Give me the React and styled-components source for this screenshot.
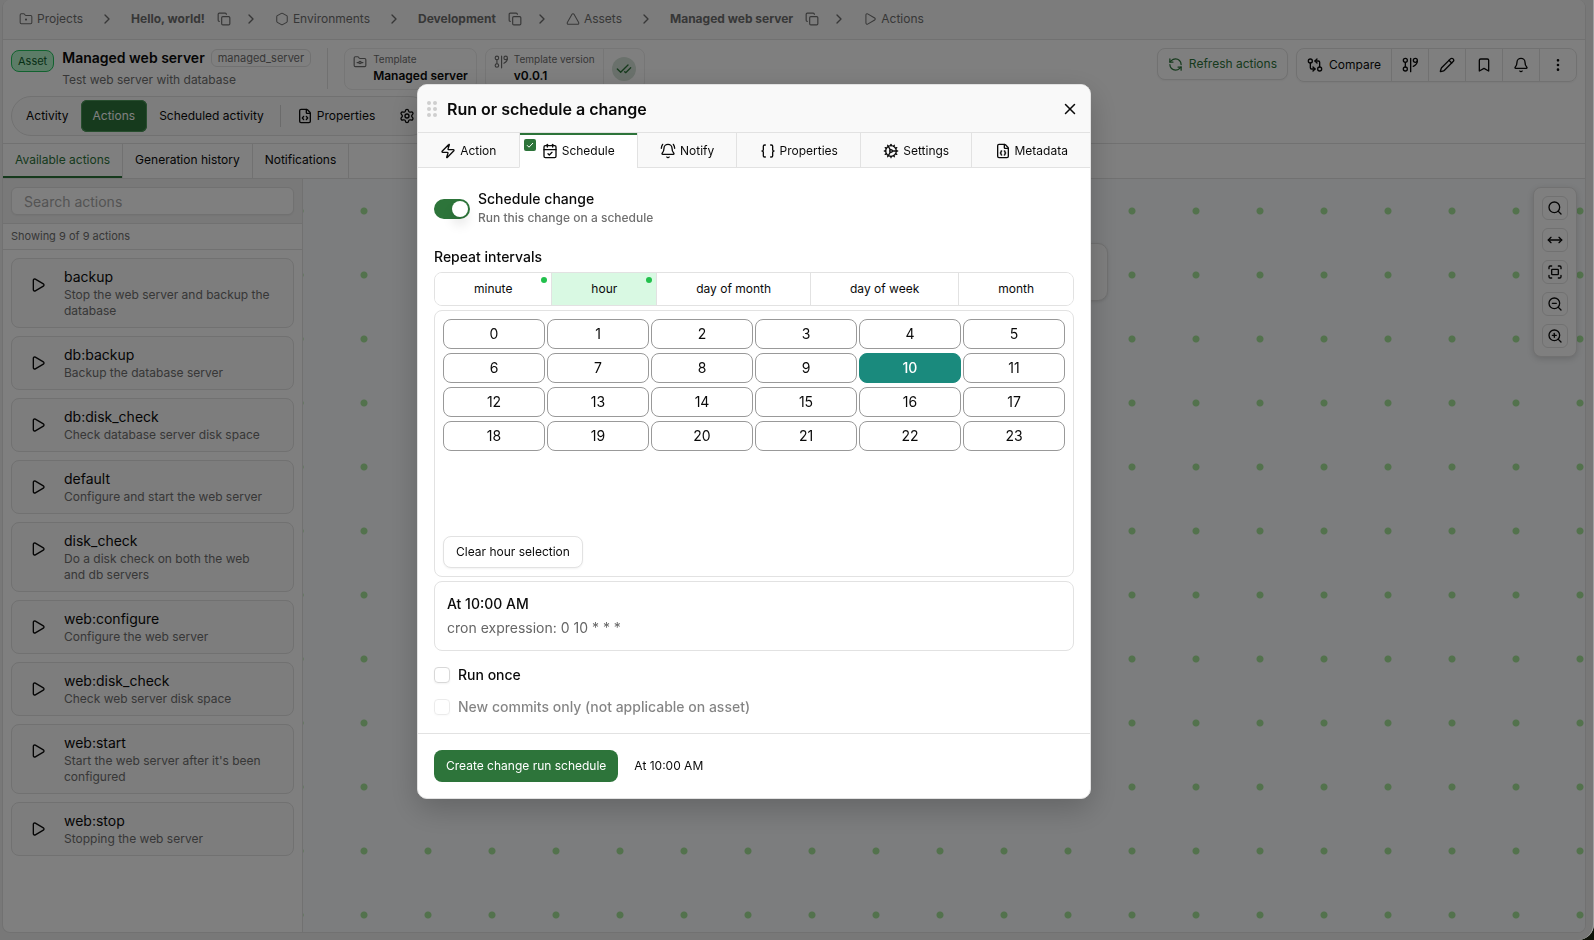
import { useState } from "react";
import styled, { createGlobalStyle, css } from "styled-components";
import {
  Bell, BellRing, Bookmark, Braces, CalendarCheck, CheckCheck, ChevronRight, Cog, Copy,
  EllipsisVertical, FileCode, FileJson, FolderDot, FolderGit, Fullscreen, GitCompareArrows,
  Hexagon, MoveHorizontal, Pencil, Play, RefreshCcw, Search, Settings, Triangle, X, Zap,
  ZoomIn, ZoomOut,
} from "lucide-react";

const actions = [
  { name: "backup", description: "Stop the web server and backup the database" },
  { name: "db:backup", description: "Backup the database server" },
  { name: "db:disk_check", description: "Check database server disk space" },
  { name: "default", description: "Configure and start the web server" },
  { name: "disk_check", description: "Do a disk check on both the web and db servers" },
  { name: "web:configure", description: "Configure the web server" },
  { name: "web:disk_check", description: "Check web server disk space" },
  { name: "web:start", description: "Start the web server after it's been configured" },
  { name: "web:stop", description: "Stopping the web server" },
];

const crumbs = [
  { label: "Projects", icon: FolderDot },
  { label: "Hello, world!", strong: true },
  { label: "Environments", icon: Hexagon },
  { label: "Development", strong: true },
  { label: "Assets", icon: Triangle },
  { label: "Managed web server", strong: true },
  { label: "Actions", icon: Play },
];

const modalTabs = [
  { label: "Action", icon: Zap },
  { label: "Schedule", icon: CalendarCheck },
  { label: "Notify", icon: BellRing },
  { label: "Properties", icon: Braces },
  { label: "Settings", icon: Cog },
  { label: "Metadata", icon: FileJson },
];

const intervals = ["minute", "hour", "day of month", "day of week", "month"];
const hours = Array.from({ length: 24 }, (_, i) => i);

function VersionIcon({ size = 16 }) {
  return (
    <svg width={size} height={size} viewBox="0 0 24 24" fill="none" stroke="currentColor" strokeWidth="2" strokeLinecap="round" strokeLinejoin="round" aria-hidden="true">
      <circle cx="5" cy="5" r="3" />
      <circle cx="5" cy="18" r="3" />
      <path d="M5 8v7M13 2v20" />
      <circle cx="20" cy="5" r="3" />
      <path d="M23 6c0 4-2 6-6 8" />
    </svg>
  );
}

function Grip() {
  return (
    <svg width="10" height="18" viewBox="0 0 10 18" fill="#cfcfcf" aria-hidden="true">
      {[3, 9, 15].map((y) => (
        <g key={y}>
          <circle cx="2" cy={y} r="2" />
          <circle cx="8" cy={y} r="2" />
        </g>
      ))}
    </svg>
  );
}

function Breadcrumbs() {
  return (
    <CrumbBar>
      {crumbs.map(({ label, icon: Icon, strong }, i) => (
        <CrumbItem key={label}>
          {i > 0 && <Separator><ChevronRight size={16} /></Separator>}
          <CrumbLink href="#" $strong={strong}>
            {Icon && <Icon size={14} strokeWidth={1.75} />}
            {label}
          </CrumbLink>
          {strong && <CopyButton aria-label={`Copy ${label}`}><Copy size={14} /></CopyButton>}
        </CrumbItem>
      ))}
    </CrumbBar>
  );
}

function AssetHeader() {
  return (
    <Header>
      <HeaderRow>
        <AssetBadge>Asset</AssetBadge>
        <AssetInfo>
          <AssetTitle>Managed web server <Slug>managed_server</Slug></AssetTitle>
          <Muted>Test web server with database</Muted>
        </AssetInfo>
        <HeaderDivider />
        <InfoPill>
          <InfoContent>
            <FolderGit size={14} />
            <div>
              <InfoLabel>Template</InfoLabel>
              <InfoValue>Managed server</InfoValue>
            </div>
          </InfoContent>
        </InfoPill>
        <InfoPill>
          <InfoContent>
            <VersionIcon size={14} />
            <div>
              <InfoLabel>Template version</InfoLabel>
              <InfoValue>v0.0.1</InfoValue>
            </div>
          </InfoContent>
          <InfoStatus><span><CheckCheck size={16} /></span></InfoStatus>
        </InfoPill>
        <HeaderActions>
          <RefreshButton><RefreshCcw size={15} />Refresh actions</RefreshButton>
          <ButtonGroup>
            <GroupButton $wide><GitCompareArrows size={16} />Compare</GroupButton>
            <GroupButton aria-label="Versions"><VersionIcon /></GroupButton>
            <GroupButton aria-label="Edit"><Pencil size={16} /></GroupButton>
            <GroupButton aria-label="Bookmark"><Bookmark size={16} /></GroupButton>
            <GroupButton aria-label="Notifications"><Bell size={16} /></GroupButton>
            <GroupButton aria-label="More"><EllipsisVertical size={16} /></GroupButton>
          </ButtonGroup>
        </HeaderActions>
      </HeaderRow>
      <NavPill>
        <NavItem href="#">Activity</NavItem>
        <NavItem href="#" $active>Actions</NavItem>
        <NavItem href="#">Scheduled activity</NavItem>
        <NavDivider />
        <NavItem href="#"><FileCode size={16} />Properties</NavItem>
        <NavItem href="#" aria-label="Settings"><Settings size={16} /></NavItem>
      </NavPill>
    </Header>
  );
}

function Sidebar() {
  return (
    <Side>
      <SearchArea>
        <SearchInput type="search" placeholder="Search actions" aria-label="Search actions" />
      </SearchArea>
      <ResultCount>Showing 9 of 9 actions</ResultCount>
      <ActionList>
        {actions.map((action) => (
          <ActionCard key={action.name}>
            <PlayButton aria-label={`Run ${action.name}`}><Play size={16} /></PlayButton>
            <div>
              <ActionName>{action.name}</ActionName>
              <Muted>{action.description}</Muted>
            </div>
          </ActionCard>
        ))}
      </ActionList>
    </Side>
  );
}

function ScheduleModal() {
  const [tab, setTab] = useState("Schedule");
  const [interval, setInterval] = useState("hour");
  const [hour, setHour] = useState(10);

  return (
    <Modal role="dialog" aria-labelledby="modal-title">
      <ModalHeader>
        <Grip />
        <ModalTitle id="modal-title">Run or schedule a change</ModalTitle>
        <CloseButton aria-label="Close"><X size={18} /></CloseButton>
      </ModalHeader>
      <ModalTabs>
        {modalTabs.map(({ label, icon: Icon }) => (
          <ModalTab key={label} $active={tab === label} onClick={() => setTab(label)}>
            {label === "Schedule" && (
              <TabMark>
                <svg width="8" height="8" viewBox="0 0 8 8" fill="none" stroke="#fff" aria-hidden="true"><path d="M1 4.2 3 6.2 7 2" /></svg>
              </TabMark>
            )}
            <Icon size={16} />
            {label}
          </ModalTab>
        ))}
      </ModalTabs>
      <ModalBody>
        <SwitchRow>
          <Switch type="checkbox" role="switch" defaultChecked />
          <span>
            <SwitchTitle>Schedule change</SwitchTitle>
            <SwitchHint>Run this change on a schedule</SwitchHint>
          </span>
        </SwitchRow>
        <SectionTitle>Repeat intervals</SectionTitle>
        <Segments>
          {intervals.map((name) => (
            <Segment key={name} $active={interval === name} onClick={() => setInterval(name)}>
              {name}
              {(name === "minute" || name === "hour") && <Dot />}
            </Segment>
          ))}
        </Segments>
        <HourPanel>
          <HourGrid>
            {hours.map((h) => (
              <HourButton key={h} $active={hour === h} onClick={() => setHour(h)}>{h}</HourButton>
            ))}
          </HourGrid>
          <OutlineButton onClick={() => setHour(null)}>Clear hour selection</OutlineButton>
        </HourPanel>
        <Summary>
          <SummaryTitle>At 10:00 AM</SummaryTitle>
          <SummaryCron>cron expression: 0 10 * * *</SummaryCron>
        </Summary>
        <Checks>
          <CheckLabel><Checkbox type="checkbox" />Run once</CheckLabel>
          <CheckLabel $disabled><Checkbox type="checkbox" disabled />New commits only (not applicable on asset)</CheckLabel>
        </Checks>
      </ModalBody>
      <ModalFooter>
        <PrimaryButton>Create change run schedule</PrimaryButton>
        <span>At 10:00 AM</span>
      </ModalFooter>
    </Modal>
  );
}

export default function App() {
  return (
    <>
      <GlobalStyle />
      <Screen>
        <Frame>
          <Breadcrumbs />
          <AssetHeader />
          <SubTabs>
            <SubTab href="#" $active>Available actions</SubTab>
            <SubTab href="#">Generation history</SubTab>
            <SubTab href="#">Notifications</SubTab>
          </SubTabs>
          <Main>
            <Sidebar />
            <Canvas>
              <CanvasNode />
              <CanvasTools>
                <ToolButton aria-label="Search"><Search size={16} /></ToolButton>
                <ToolButton aria-label="Fit width"><MoveHorizontal size={16} /></ToolButton>
                <ToolButton aria-label="Fit screen"><Fullscreen size={16} /></ToolButton>
                <ToolButton aria-label="Zoom out"><ZoomOut size={16} /></ToolButton>
                <ToolButton aria-label="Zoom in"><ZoomIn size={16} /></ToolButton>
              </CanvasTools>
            </Canvas>
          </Main>
        </Frame>
      </Screen>
      <Overlay />
      <ScheduleModal />
    </>
  );
}

const line = "#e2e2e2";
const green = "#2d743a";

const GlobalStyle = createGlobalStyle`
  * {
    box-sizing: border-box;
  }

  body {
    margin: 0;
    background: #10140a;
    color: #0a0a0a;
    font-family: Inter, "Liberation Sans", sans-serif;
    font-size: 12px;
    line-height: 16px;
    font-weight: 400;
  }

  button, input {
    font: inherit;
    color: inherit;
    margin: 0;
  }

  button {
    background: none;
    border: 0;
    padding: 0;
    cursor: pointer;
  }

  a {
    color: inherit;
    text-decoration: none;
  }

  h1, h2, h3, p {
    margin: 0;
  }

  svg {
    flex-shrink: 0;
  }
`;

const Screen = styled.div`
  display: flex;
  height: 100vh;
  padding: 0 8px 7px 2px;
  background: #f1f1f1;
  border-bottom-right-radius: 16px;
`;

const Frame = styled.div`
  flex: 1;
  min-width: 0;
  display: flex;
  flex-direction: column;
  background: #fff;
  border: 1px solid ${line};
  border-top: 0;
  border-radius: 8px;
  overflow: hidden;
`;

const CrumbBar = styled.nav`
  display: flex;
  align-items: center;
  height: 40px;
  padding: 0 16px 2px;
  background: #f8f8f8;
  border-bottom: 1px solid ${line};
  color: #6f6f6f;
`;

const CrumbItem = styled.div`
  display: flex;
  align-items: center;
`;

const CrumbLink = styled.a`
  display: flex;
  align-items: center;
  gap: 4px;
  font-weight: ${(props) => (props.$strong ? 700 : 400)};
`;

const Separator = styled.span`
  display: flex;
  padding: 0 16px;
`;

const CopyButton = styled.button`
  display: flex;
  margin: 0 -4px 0 12px;
`;

const Header = styled.header`
  padding: 8px 8px 7px;
  border-bottom: 1px solid ${line};
`;

const HeaderRow = styled.div`
  display: flex;
  align-items: flex-start;
  gap: 8px;
  margin-bottom: 6px;
`;

const AssetBadge = styled.span`
  margin-top: 2px;
  padding: 2px 6px;
  background: #b9f8cf;
  border: 1px solid #22c55e;
  border-radius: 8px;
  color: #10602c;
  font-size: 11px;
`;

const AssetInfo = styled.div`
  padding-right: 8px;
`;

const AssetTitle = styled.h1`
  display: flex;
  align-items: center;
  gap: 6px;
  margin-bottom: 4px;
  font-size: 14px;
  line-height: 20px;
  font-weight: 600;
`;

const Slug = styled.span`
  padding: 0 6px;
  border: 1px solid ${line};
  border-radius: 6px;
  color: #6f6f6f;
  font-size: 11px;
  line-height: 16px;
  font-weight: 400;
`;

const Muted = styled.p`
  color: #6f6f6f;
`;

const HeaderDivider = styled.div`
  width: 1px;
  height: 41px;
  margin-right: 8px;
  background: ${line};
`;

const InfoPill = styled.div`
  display: flex;
  height: 42px;
  border: 1px solid #ececec;
  border-radius: 8px;
`;

const InfoContent = styled.div`
  display: flex;
  gap: 6px;
  padding: 3px 8px;

  svg {
    margin-top: 3px;
    color: #6f6f6f;
  }
`;

const InfoLabel = styled.div`
  margin-bottom: 2px;
  color: #6f6f6f;
  font-size: 10px;
  line-height: 14px;
`;

const InfoValue = styled.div`
  font-weight: 600;
`;

const InfoStatus = styled.div`
  padding: 8px;
  border-left: 1px solid #ececec;

  span {
    display: grid;
    place-items: center;
    width: 24px;
    height: 24px;
    border-radius: 50%;
    background: #d5e3d8;
    color: ${green};
  }
`;

const HeaderActions = styled.div`
  display: flex;
  align-items: flex-start;
  gap: 8px;
  margin-left: auto;
`;

const OutlineButton = styled.button`
  display: flex;
  align-items: center;
  gap: 6px;
  height: 32px;
  padding: 0 12px;
  background: #fff;
  border: 1px solid ${line};
  border-radius: 8px;
  box-shadow: 0 1px 2px rgba(0, 0, 0, 0.05);
`;

const RefreshButton = styled(OutlineButton)`
  padding: 0 10px;
  color: ${green};
`;

const ButtonGroup = styled.div`
  display: flex;
  height: 34px;
  border: 1px solid ${line};
  border-radius: 8px;
  box-shadow: 0 1px 2px rgba(0, 0, 0, 0.05);
`;

const GroupButton = styled.button`
  display: flex;
  align-items: center;
  justify-content: center;
  gap: 6px;
  width: ${(props) => (props.$wide ? "auto" : "37px")};
  padding: 0 10px;

  & + & {
    border-left: 1px solid ${line};
  }
`;

const NavPill = styled.nav`
  display: flex;
  align-items: center;
  width: fit-content;
  padding: 3px 2px;
  background: #fafafa;
  border: 1px solid ${line};
  border-radius: 20px;
`;

const NavItem = styled.a`
  display: flex;
  align-items: center;
  gap: 4px;
  height: 32px;
  padding: 0 12px;
  border-radius: 6px;
  ${(props) => props.$active && css`
    background: ${green};
    box-shadow: inset 0 0 0 1px #4f9a5d;
    color: #fff;
  `}
`;

const NavDivider = styled.span`
  width: 1px;
  height: 22px;
  margin: 0 4px;
  background: #d6d6d6;
`;

const SubTabs = styled.nav`
  display: flex;
  height: 35px;
  border-bottom: 1px solid ${line};
`;

const SubTab = styled.a`
  display: flex;
  align-items: center;
  padding: 0 12px 2px;
  border-right: 1px solid ${line};
  ${(props) => props.$active && css`
    color: ${green};
    box-shadow: inset 0 -2px ${green};
  `}
`;

const Main = styled.div`
  flex: 1;
  display: flex;
  min-height: 0;
`;

const Side = styled.aside`
  flex: 0 0 300px;
  border-right: 1px solid ${line};
`;

const SearchArea = styled.div`
  padding: 8px;
  background: #f3f3f3;
  border-bottom: 1px solid ${line};
`;

const SearchInput = styled.input`
  display: block;
  width: 100%;
  height: 28px;
  padding: 0 12px;
  background: #fff;
  border: 1px solid ${line};
  border-radius: 6px;
  box-shadow: 0 1px 2px rgba(0, 0, 0, 0.05);
  font-size: 14px;

  &::placeholder {
    color: #a8a8a8;
  }
`;

const ResultCount = styled.p`
  padding: 4px 8px 5px;
  border-bottom: 1px solid ${line};
  color: #6f6f6f;
  font-size: 11px;
`;

const ActionList = styled.div`
  display: flex;
  flex-direction: column;
  gap: 8px;
  padding: 8px;
`;

const ActionCard = styled.article`
  display: flex;
  background: #fafafa;
  border: 1px solid ${line};
  border-radius: 8px;

  > div {
    padding: 8px 22px 8px 0;
  }
`;

const PlayButton = styled.button`
  flex: 0 0 52px;
  display: grid;
  place-items: center;
  height: 52px;
`;

const ActionName = styled.h3`
  font-size: 14px;
  line-height: 20px;
  font-weight: 400;
`;

const Canvas = styled.section`
  flex: 1;
  position: relative;
  background: #f8fafc radial-gradient(circle, #a6e59a 3px, transparent 4px) 29px 0 / 64px 64px;
`;

const CanvasNode = styled.div`
  position: absolute;
  top: 64px;
  left: 545px;
  width: 260px;
  height: 58px;
  background: #fff;
  border: 1px solid ${line};
  border-radius: 10px;
  box-shadow: 0 1px 3px rgba(0, 0, 0, 0.1);
`;

const CanvasTools = styled.div`
  position: absolute;
  top: 8px;
  right: 8px;
  display: grid;
  gap: 8px;
  padding: 8px;
  background: #fff;
  border: 1px solid ${line};
  border-radius: 8px;
  box-shadow: 0 2px 6px rgba(0, 0, 0, 0.15);
`;

const ToolButton = styled.button`
  display: grid;
  place-items: center;
  width: 26px;
  height: 24px;
  border: 1px solid ${line};
  border-radius: 6px;
`;

const Overlay = styled.div`
  position: fixed;
  inset: 0;
  background: rgba(0, 0, 0, 0.5);
  border-right: 1px solid rgba(255, 255, 255, 0.3);
  border-bottom-right-radius: 16px;
`;

const Modal = styled.section`
  position: fixed;
  top: 84px;
  left: 417px;
  width: 674px;
  background: #fff;
  border: 1px solid ${line};
  border-radius: 10px;
  box-shadow: 0 10px 30px rgba(0, 0, 0, 0.2);
  overflow: hidden;
`;

const ModalHeader = styled.header`
  display: flex;
  align-items: center;
  gap: 10px;
  height: 48px;
  padding: 0 10px 0 9px;
  background: #f9f9f9;
  border-bottom: 1px solid ${line};
`;

const ModalTitle = styled.h2`
  font-size: 16px;
  line-height: 24px;
  font-weight: 600;
`;

const CloseButton = styled.button`
  display: grid;
  place-items: center;
  width: 20px;
  height: 20px;
  margin-left: auto;
`;

const ModalTabs = styled.div`
  display: flex;
  height: 35px;
`;

const ModalTab = styled.button`
  position: relative;
  flex: 1 1 auto;
  display: flex;
  align-items: center;
  justify-content: center;
  gap: 4px;
  padding-top: 2px;
  background: ${(props) => (props.$active ? "#fff" : "#f9f9f9")};
  border-bottom: 1px solid ${(props) => (props.$active ? "#fff" : line)};
  box-shadow: ${(props) => (props.$active ? `inset 0 2px ${green}` : "none")};

  & + & {
    border-left: 1px solid ${line};
  }
`;

const TabMark = styled.span`
  position: absolute;
  top: 6px;
  left: 4px;
  display: grid;
  place-items: center;
  width: 12px;
  height: 12px;
  background: ${green};
  border-radius: 2px;
`;

const ModalBody = styled.div`
  padding: 21px 16px 18px;
`;

const SwitchRow = styled.label`
  display: flex;
  align-items: center;
  gap: 8px;
  margin-bottom: 21px;
`;

const Switch = styled.input`
  appearance: none;
  width: 36px;
  height: 20px;
  margin-top: 3px;
  padding: 2px;
  background: ${green};
  border-radius: 10px;

  &::before {
    content: "";
    display: block;
    width: 16px;
    height: 16px;
    margin-left: 16px;
    background: #fff;
    border-radius: 50%;
    box-shadow: 0 8px 12px rgba(0, 0, 0, 0.1);
  }

  &:not(:checked) {
    background: #d4d4d4;
  }

  &:not(:checked)::before {
    margin-left: 0;
  }
`;

const SwitchTitle = styled.span`
  display: block;
  margin-bottom: 1px;
  font-size: 14px;
  line-height: 20px;
  font-weight: 500;
`;

const SwitchHint = styled.span`
  display: block;
  color: #6f6f6f;
  font-weight: 500;
`;

const SectionTitle = styled.h3`
  margin-bottom: 5px;
  font-size: 14px;
  line-height: 20px;
  font-weight: 500;
`;

const Segments = styled.div`
  display: flex;
  height: 34px;
  margin-bottom: 4px;
  border: 1px solid ${line};
  border-radius: 8px;
  overflow: hidden;
`;

const Segment = styled.button`
  position: relative;
  flex: 1 1 auto;
  background: ${(props) => (props.$active ? "#d9f9e3" : "#fff")};

  & + & {
    border-left: 1px solid ${line};
  }
`;

const Dot = styled.span`
  position: absolute;
  top: 4px;
  right: 4px;
  width: 6px;
  height: 6px;
  border-radius: 50%;
  background: #22c04c;
`;

const HourPanel = styled.div`
  display: flex;
  flex-direction: column;
  align-items: flex-start;
  justify-content: space-between;
  min-height: 267px;
  margin-bottom: 4px;
  padding: 8px;
  border: 1px solid ${line};
  border-radius: 8px;
`;

const HourGrid = styled.div`
  width: 100%;
  display: grid;
  grid-template-columns: repeat(6, 1fr);
  gap: 4px 2px;
`;

const HourButton = styled.button`
  height: 30px;
  border: 1px solid ${(props) => (props.$active ? "#1a8a7d" : "#999")};
  border-radius: 8px;
  background: ${(props) => (props.$active ? "#1a8a7d" : "#fff")};
  color: ${(props) => (props.$active ? "#fff" : "inherit")};
  font-size: 14px;
  font-weight: ${(props) => (props.$active ? 500 : 400)};
`;

const Summary = styled.div`
  display: grid;
  gap: 4px;
  padding: 12px;
  border: 1px solid ${line};
  border-radius: 8px;
  font-size: 14px;
  line-height: 20px;
`;

const SummaryTitle = styled.p`
  font-weight: 500;
`;

const SummaryCron = styled.p`
  color: #666;
`;

const Checks = styled.div`
  display: grid;
  gap: 16px;
  margin-top: 16px;
`;

const CheckLabel = styled.label`
  display: flex;
  align-items: center;
  gap: 8px;
  font-size: 14px;
  font-weight: 500;
  opacity: ${(props) => (props.$disabled ? 0.5 : 1)};
`;

const Checkbox = styled.input`
  appearance: none;
  width: 16px;
  height: 16px;
  border: 1px solid #d8d8d8;
  border-radius: 4px;
  box-shadow: 0 1px 2px rgba(0, 0, 0, 0.05);

  &:checked {
    background: ${green};
    border-color: ${green};
  }
`;

const ModalFooter = styled.footer`
  display: flex;
  align-items: center;
  gap: 16px;
  padding: 16px;
  border-top: 1px solid ${line};
`;

const PrimaryButton = styled.button`
  height: 32px;
  padding: 0 12px;
  background: ${green};
  border-radius: 8px;
  color: #fff;
`;
